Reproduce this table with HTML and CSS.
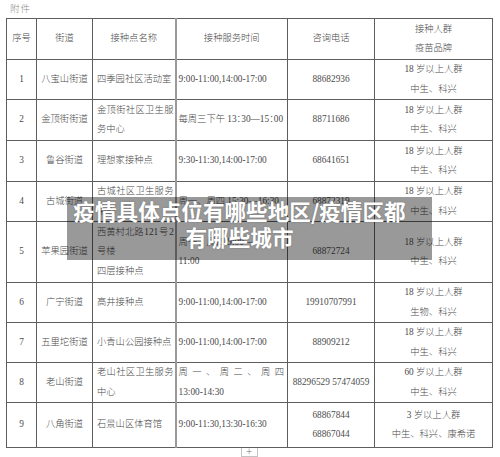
FILE: index.html
```html
<!DOCTYPE html>
<html lang="zh">
<head>
<meta charset="utf-8">
<link rel="stylesheet" href="styles.css">
</head>
<body>
<div class="page">
  <div class="caption">附件</div>
  <div class="sheet">
    <table class="grid">
      <colgroup>
        <col class="w-no"><col class="w-street"><col class="w-site"><col class="w-time"><col class="w-phone"><col class="w-group">
      </colgroup>
      <tr class="h41">
        <th>序号</th><th>街道</th><th>接种点名称</th><th class="split">接种服务时间</th><th>咨询电话</th><th>接种人群<br>疫苗品牌</th>
      </tr>
      <tr class="h39">
        <td>1</td><td>八宝山街道</td><td class="site">四季园社区活动室</td><td class="time split">9:00-11:00,14:00-17:00</td><td>88682936</td><td>18 岁以上人群<br>中生、科兴</td>
      </tr>
      <tr class="h41">
        <td>2</td><td>金顶街街道</td><td class="site">金顶街社区卫生服务中心</td><td class="time split nowrap"><span class="halt">每周三下午 13：30—15：00</span></td><td>88711686</td><td>18 岁以上人群<br>中生、科兴</td>
      </tr>
      <tr class="h41">
        <td>3</td><td>鲁谷街道</td><td class="site">理想家接种点</td><td class="time split">9:30-11:30,14:00-17:00</td><td>68641651</td><td>18 岁以上人群<br>中生、科兴</td>
      </tr>
      <tr class="h39">
        <td>4</td><td>古城街道</td><td class="site">古城社区卫生服务中心</td><td class="time split nowrap">周一、周四 15:30—16:30</td><td>68872319</td><td>18 岁以上人群<br>中生、科兴</td>
      </tr>
      <tr class="h61">
        <td>5</td><td>苹果园街道</td><td class="site nowrap tight">西黄村北路 121 号 2<br>号楼<br>四层接种点</td><td class="time split">周一、周四 9:00—<br>11:00</td><td>68872724</td><td>18 岁以上人群<br>中生、科兴</td>
      </tr>
      <tr class="h39">
        <td>6</td><td>广宁街道</td><td class="site">高井接种点</td><td class="time split">9:00-11:00,14:00-17:00</td><td>19910707991</td><td>18 岁以上人群<br>生物、科兴</td>
      </tr>
      <tr class="h39">
        <td>7</td><td>五里坨街道</td><td class="site">小青山公园接种点</td><td class="time split">9:00-11:00,14:00-17:00</td><td>88909212</td><td>18 岁以上人群<br>中生、科兴</td>
      </tr>
      <tr class="h40">
        <td>8</td><td>老山街道</td><td class="site">老山社区卫生服务中心</td><td class="time split">周一、周二、周四 <span class="nowrap">13:00-14:30</span></td><td>88296529 57474059</td><td>60 岁以上人群<br>中生、科兴</td>
      </tr>
      <tr class="h45">
        <td>9</td><td>八角街道</td><td class="site">石景山区体育馆</td><td class="time split">9:00-11:30,13:30-16:30</td><td>68867844<br>68867044</td><td>3 岁以上人群<br>中生、科兴、康希诺</td>
      </tr>
    </table>
    <div class="overlay"><div class="headline">疫情具体点位有哪些地区/疫情区都有哪些城市</div></div>
    <div class="tabbar"><span class="tab">+</span></div>
  </div>
</div>
</body>
</html>
```

FILE: styles.css
```css
html, body {
  margin: 0;
  background: #ffffff;
}
body {
  font-family: "Liberation Serif", "Noto Sans CJK SC", serif;
  color: #4a4a4a;
}
.page {
  padding: 0 8px 0 6px;
  width: 486px;
}
.caption {
  height: 18px;
  line-height: 17px;
  padding-left: 4px;
  font-size: 9.5px;
  letter-spacing: 1px;
  color: #8a8a8a;
  font-family: "Noto Sans CJK SC", sans-serif;
  font-weight: 300;
}
.sheet {
  position: relative;
  width: 486px;
}
.grid {
  width: 486px;
  border-collapse: collapse;
  table-layout: fixed;
  font-size: 9.3px;
  line-height: 19.5px;
  font-weight: 300;
}
.w-no { width: 30px; }
.w-street { width: 56px; }
.w-site { width: 83px; }
.w-time { width: 112px; }
.w-phone { width: 87px; }
.w-group { width: 118px; }
.grid th, .grid td {
  border: 1px solid #5e5e5e;
  padding: 0;
  text-align: center;
  vertical-align: middle;
  font-weight: 300;
  color: #4a4a4a;
}
.grid .split {
  border-left: 2px solid #9a9a9a;
}
.h39 { height: 39px; }
.h40 { height: 40px; }
.h41 { height: 41px; }
.h45 { height: 45px; }
.h61 { height: 61px; }
.grid .site {
  text-align: justify;
  padding: 0 1px 0 4px;
}
.grid .time {
  text-align: justify;
  padding: 0 3px 0 2px;
}
.nowrap {
  white-space: nowrap;
}
.tight {
  word-spacing: -1.5px;
}
.halt {
  font-feature-settings: "halt";
}
.overlay {
  position: absolute;
  left: 61px;
  top: 179px;
  width: 365px;
  height: 63px;
  box-sizing: border-box;
  padding: 0 24px 9px 4px;
  background: rgba(0, 0, 0, 0.4);
  display: flex;
  align-items: center;
}
.headline {
  width: 100%;
  text-align: center;
  color: #ffffff;
  font-family: "Noto Sans CJK SC", sans-serif;
  font-weight: 700;
  font-size: 21.6px;
  line-height: 26px;
  text-shadow: 0 0 2px rgba(0, 0, 0, 0.25);
}
.tabbar {
  display: flex;
  justify-content: center;
}
.tab {
  width: 15px;
  height: 8px;
  border: 1px solid #c4c4c4;
  border-top: 0;
  font-family: "DejaVu Sans", sans-serif;
  font-size: 8px;
  line-height: 7px;
  color: #999;
  text-align: center;
}
```
